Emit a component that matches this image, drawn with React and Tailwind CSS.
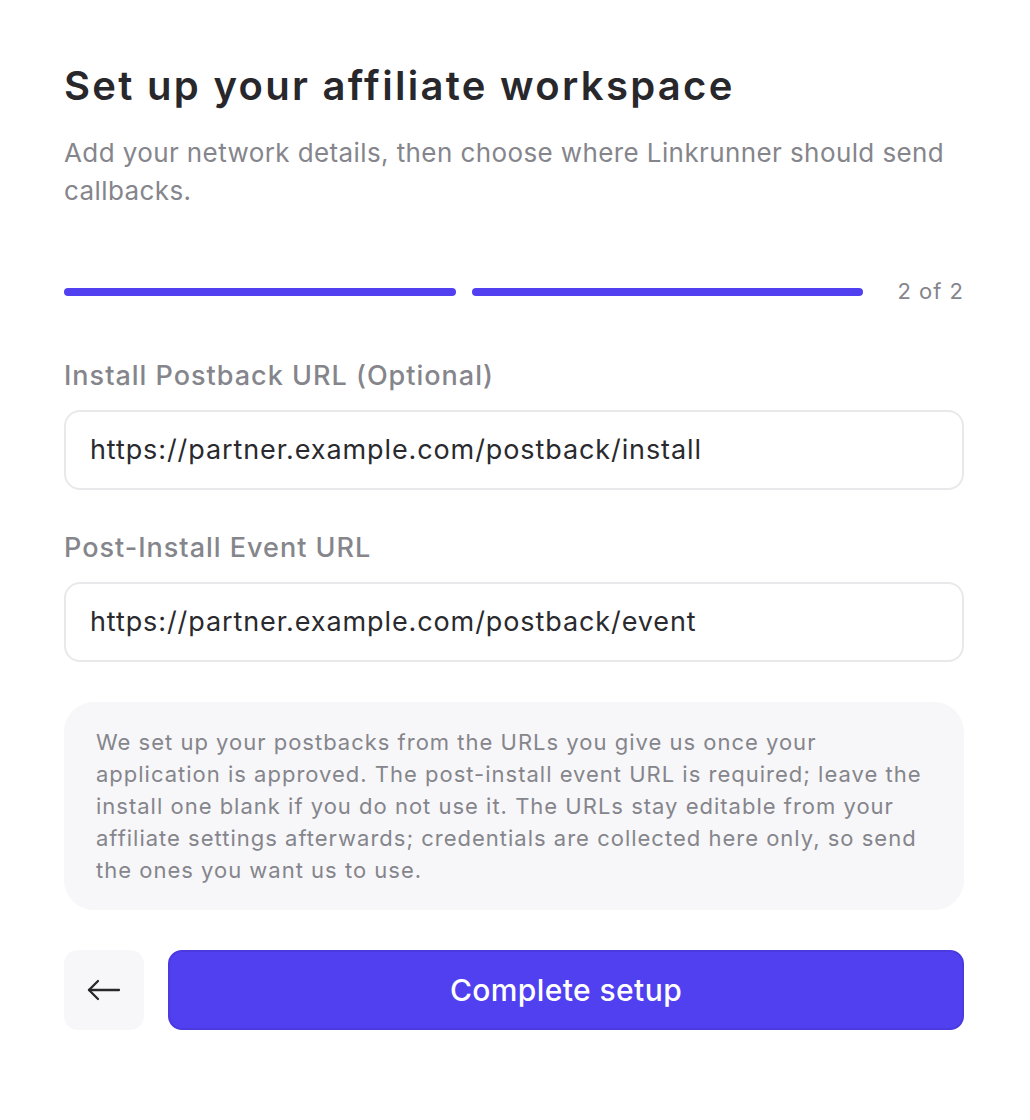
import React from "react";

function Field({ label, value }) {
  return (
    <div className="flex flex-col gap-[18px]">
      <label className="text-[27px] leading-[32px] font-medium tracking-[1px] text-[#85858c]">{label}</label>
      <div className="h-[80px] rounded-[16px] border-2 border-[#e9e9ec] bg-white flex items-center px-[24px]">
        <span className="text-[27px] tracking-[0.9px] text-[#2a2a2e]">{value}</span>
      </div>
    </div>
  );
}

function BackArrow() {
  return (
    <svg width="40" height="40" viewBox="0 0 40 40" fill="none" stroke="currentColor" strokeWidth="2.3" strokeLinecap="round" strokeLinejoin="round">
      <path d="M35 20H5" />
      <path d="M14 11L5 20L14 29" />
    </svg>
  );
}

export default function App() {
  return (
    <div
      className="min-h-[1120px] bg-white pl-[64px] pr-[66px] pt-[56px]"
      style={{ fontFamily: "Inter, 'Noto Sans', sans-serif" }}
    >
      <h1 className="text-[40px] leading-[60px] font-semibold tracking-[2.3px] text-[#28282c]">
        Set up your affiliate workspace
      </h1>
      <p className="mt-[18px] text-[26px] leading-[38px] tracking-[0.4px] text-[#85858c]">
        Add your network details, then choose where Linkrunner should send callbacks.
      </p>

      <div className="mt-[65px] flex items-center gap-[16px]">
        <div className="flex-1 h-[8px] rounded-full bg-[#5040f0]" />
        <div className="flex-1 h-[8px] rounded-full bg-[#5040f0]" />
        <span className="ml-[18px] text-[22px] tracking-[1px] text-[#85858c]">2 of 2</span>
      </div>

      <div className="mt-[52px] flex flex-col gap-[42px]">
        <Field label="Install Postback URL (Optional)" value="https://partner.example.com/postback/install" />
        <Field label="Post-Install Event URL" value="https://partner.example.com/postback/event" />
      </div>

      <div className="mt-[40px] rounded-[30px] bg-[#f7f7f9] px-[32px] py-[24px]">
        <p className="text-[22px] leading-[32px] tracking-[1px] text-[#85858c]">
          We set up your postbacks from the URLs you give us once your application is approved. The
          post-install event URL is required; leave the install one blank if you do not use it. The URLs
          stay editable from your affiliate settings afterwards; credentials are collected here only, so
          send the ones you want us to use.
        </p>
      </div>

      <div className="mt-[40px] flex gap-[24px]">
        <button className="w-[80px] h-[80px] shrink-0 rounded-[14px] bg-[#f7f7f9] flex items-center justify-center text-[#28282c]">
          <BackArrow />
        </button>
        <button className="flex-1 h-[80px] rounded-[14px] bg-[#5040f0] border-2 border-[#4a3ae0] text-white text-[30px] tracking-[0.4px] font-medium">
          Complete setup
        </button>
      </div>
    </div>
  );
}
